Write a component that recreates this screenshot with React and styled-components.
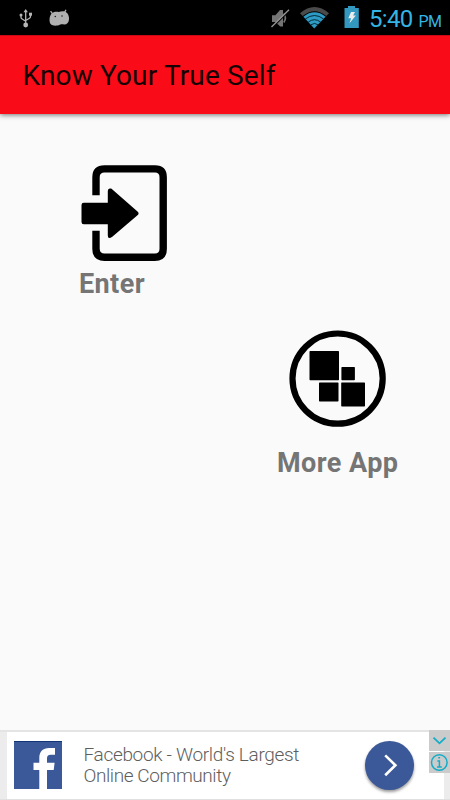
import React from "react";
import styled, { createGlobalStyle } from "styled-components";

const GlobalStyle = createGlobalStyle`
  * { box-sizing: border-box; }
  body { margin: 0; background: #fafafa; font-family: Roboto, "Liberation Sans", sans-serif; }
  svg { display: block; flex: none; }
`;

const Screen = styled.div`
  width: 450px;
  height: 800px;
  display: flex;
  flex-direction: column;
  overflow: hidden;
  background: #fafafa;
`;

const StatusBar = styled.header`
  height: 35px;
  flex: none;
  display: flex;
  justify-content: space-between;
  padding: 0 8px 0 19px;
  background: #000;
`;

const StatusGroup = styled.div`
  display: flex;
  align-items: flex-start;
`;

const StatusIcon = styled.svg`
  margin: ${({ $top }) => $top}px ${({ $gap }) => $gap}px 0 0;
`;

const Clock = styled.time`
  display: flex;
  align-items: baseline;
  gap: 6px;
  width: 73px;
  padding-top: 5px;
  color: #33b5e5;
  font-size: 24px;
  line-height: 29px;
  letter-spacing: -0.7px;
  white-space: nowrap;
`;

const Meridiem = styled.span`
  font-size: 16px;
  letter-spacing: -0.5px;
`;

const AppBar = styled.div`
  height: 79px;
  flex: none;
  display: flex;
  align-items: center;
  padding: 0 22.5px 0;
  background: #f90c17;
  box-shadow: 0 1px 5px rgba(0, 0, 0, 0.55);
  border-top: 1px solid #c90812;
`;

const Title = styled.h1`
  margin: 0;
  color: #160205;
  font-size: 28px;
  font-weight: 400;
  letter-spacing: 0.15px;
  white-space: nowrap;
`;

const Menu = styled.main`
  flex: 1;
  display: flex;
  flex-direction: column;
  align-items: flex-start;
  padding-top: 50px;
`;

const MenuItem = styled.button`
  display: flex;
  flex-direction: column;
  align-items: flex-start;
  gap: ${({ $gap }) => $gap}px;
  margin: ${({ $top }) => $top}px 0 0 ${({ $left }) => $left}px;
  padding: 0;
  border: 0;
  background: none;
  font-family: inherit;
`;

const MenuIcon = styled.svg`
  margin-left: ${({ $inset }) => $inset}px;
`;

const MenuLabel = styled.span`
  height: 32px;
  color: #757575;
  font-size: 27px;
  font-weight: 700;
  line-height: 32px;
  letter-spacing: ${({ $tracking }) => $tracking}px;
  white-space: nowrap;
`;

const AdBanner = styled.footer`
  position: relative;
  height: 70px;
  flex: none;
  display: flex;
  padding: 0 6px 0 7px;
  background: #ececec;
  border-top: 2px solid #e4e4e4;
  border-bottom: 1px solid #e0e0e0;
`;

const AdCard = styled.div`
  flex: 1;
  display: flex;
  align-items: flex-start;
  padding: 9px 0 0 7px;
  background: #fff;
`;

const AdText = styled.p`
  width: 250px;
  margin: 3px 0 0 21.5px;
  color: #5e5e5e;
  font-size: 19px;
  font-weight: 300;
  line-height: 21px;
  white-space: nowrap;
`;

const AdLine = styled.span`
  display: block;
  letter-spacing: ${({ $tracking }) => $tracking}px;
`;

const AdAction = styled.button`
  width: 49px;
  height: 49px;
  margin-left: 31.5px;
  padding: 0;
  border: 0;
  border-radius: 50%;
  background: #3b5998;
  box-shadow: 0 2px 3px rgba(0, 0, 0, 0.4);
`;

const AdControls = styled.div`
  position: absolute;
  top: -2px;
  right: 0;
  display: flex;
  flex-direction: column;
  gap: 1px;
`;

const AdControl = styled.button`
  width: 21px;
  height: 21px;
  padding: 0;
  border: 0;
  background: #cbcbcb;
`;

function UsbIcon() {
  return (
    <StatusIcon $top={9} $gap={16} width="14" height="19" viewBox="0 0 14 19" fill="none" stroke="#b5b5b5" strokeWidth="1.3">
      <path d="M6.7 2v14M2 6v2.2q0 1.2 1.2 1.8l3.5 2.2M11.5 5v2.6q0 1-1 1.6l-3.8 2.3" />
      <path d="M6.7 0 4.5 3.3h4.4Z" fill="#b5b5b5" stroke="none" />
      <circle cx="6.7" cy="16" r="2.4" fill="#b5b5b5" stroke="none" />
      <circle cx="2" cy="6" r="1.5" fill="#b5b5b5" stroke="none" />
      <path d="M10 3.7h3v3h-3z" fill="#b5b5b5" stroke="none" />
    </StatusIcon>
  );
}

function DebugIcon() {
  return (
    <StatusIcon $top={9} $gap={0} width="21" height="18" viewBox="0 0 21 18" fill="#b0b0b0">
      <path d="m1.6 2.2 2.3 3.2M17 .8l-2 3.6" stroke="#b0b0b0" strokeWidth="1.3" />
      <path d="M3.2 4C5.5 2.4 8 2.7 9.8 3.1 12 2.1 15.5 1.8 17.4 3.4c2 1.5 3 4.5 2.5 7.6-.4 2.9-2.2 4.4-4.4 4.5-1.5 0-2.4-.3-3.3-.2-1 .1-1.8 1.1-3.5 1.3-2.8.3-5.8.2-7.1-1.5C-.2 12.6.2 6.3 3.2 4Z" />
      <circle cx="6.3" cy="7.5" r=".8" fill="#222" />
      <circle cx="13" cy="7" r=".8" fill="#222" />
    </StatusIcon>
  );
}

function MutedIcon() {
  return (
    <StatusIcon $top={9} $gap={10} width="19" height="19" viewBox="0 0 19 19">
      <path d="M1 6.2h3.4L9 1h3v16.5H9.2L4.4 13H1Z" fill="#747474" />
      <path d="M12.8 4.5q3.2 4.5 0 9" fill="none" stroke="#747474" strokeWidth="1.7" />
      <path d="M1 19 18.6 1.6" stroke="#000" strokeWidth="1.3" />
      <path d="M.5 18 18 .7" stroke="#929292" strokeWidth="1.4" />
    </StatusIcon>
  );
}

function WifiIcon() {
  return (
    <StatusIcon $top={6} $gap={15} width="29" height="23" viewBox="0 0 29 23">
      <path d="M0 7.2Q14.5-5.4 29 7.2L26.3 10Q14.5.5 2.7 10Z" fill="#4a4a4a" />
      <path d="M3.4 10.7Q14.5 1.8 25.6 10.7L14.2 22.4Z" fill="#2e9bc5" />
      <path d="M5.3 13q9.2-7 18.4 0M8.3 16.1q6.2-4.8 12.4 0M11 18.8q3.5-2.8 7 0" fill="none" stroke="#001b27" strokeWidth=".9" />
    </StatusIcon>
  );
}

function BatteryIcon() {
  return (
    <StatusIcon $top={6} $gap={9} width="16" height="22" viewBox="0 0 16 22">
      <path d="M4 0h7v2h3.8v20H.5V2H4Z" fill="#3298c0" />
      <path d="M7 6h4L9.1 9.5h2.7L5.4 17.5l1.7-5.3H4.3Z" fill="#ececec" />
    </StatusIcon>
  );
}

function EnterIcon() {
  return (
    <MenuIcon $inset={2} width="87" height="98" viewBox="0 0 87 98">
      <path d="M15 31V13Q15 4.7 23.5 4.7H74Q82.2 4.7 82.2 13V84.5Q82.2 93 74 93H23.5Q15 93 15 84.5V66.5" transform="translate(0 .2)" fill="none" stroke="#000" strokeWidth="7.4" />
      <path d="M2.8 38.7H26.8V27q0-3.2 3-2.4.8.2 1.6 1L56.2 47.2q2.8 2.2 0 4.4L31.3 72.8q-4.5 3.1-4.5-1.3V60.2H2.8Q.5 60.2.5 58V41Q.5 38.7 2.8 38.7Z" />
    </MenuIcon>
  );
}

function AppsIcon() {
  return (
    <MenuIcon $inset={12} width="98" height="98" viewBox="0 0 98 98">
      <circle cx="48.6" cy="48.6" r="45.1" fill="none" stroke="#000" strokeWidth="6.2" />
      <rect x="20.5" y="21" width="29.5" height="29.3" rx=".7" />
      <rect x="52.4" y="37" width="13.5" height="13.3" rx=".7" />
      <rect x="30" y="52.4" width="19.5" height="19" rx=".7" />
      <rect x="52.2" y="52.4" width="23.8" height="24" rx=".7" />
    </MenuIcon>
  );
}

export default function App() {
  return (
    <>
      <GlobalStyle />
      <Screen>
        <StatusBar>
          <StatusGroup>
            <UsbIcon />
            <DebugIcon />
          </StatusGroup>
          <StatusGroup>
            <MutedIcon />
            <WifiIcon />
            <BatteryIcon />
            <Clock>5:40<Meridiem>PM</Meridiem></Clock>
          </StatusGroup>
        </StatusBar>
        <AppBar>
          <Title>Know Your True Self</Title>
        </AppBar>
        <Menu>
          <MenuItem $top={0} $left={79} $gap={6}>
            <EnterIcon />
            <MenuLabel $tracking={0.4}>Enter</MenuLabel>
          </MenuItem>
          <MenuItem $top={30} $left={277} $gap={19}>
            <AppsIcon />
            <MenuLabel $tracking={0.45}>More App</MenuLabel>
          </MenuItem>
        </Menu>
        <AdBanner>
          <AdCard>
            <svg width="48" height="48" viewBox="0 0 48 48">
              <path d="M0 0h48v48H0z" fill="#3b5998" />
              <path d="M0 .5h48" stroke="#123579" />
              <path d="M25.3 48V29h-5.8v-7.3h5.8v-4.5C25.3 10.5 29 7 35 7h6v6.7h-4.2c-3 0-3.8 1.4-3.8 3.8v4.2h7.6L39.7 29H33v19Z" fill="#fff" />
            </svg>
            <AdText>
              <AdLine $tracking={-0.32}>Facebook - World's Largest</AdLine>
              <AdLine $tracking={-0.42}>Online Community</AdLine>
            </AdText>
            <AdAction aria-label="Open">
              <svg width="49" height="49" viewBox="0 0 49 49" fill="none" stroke="#fff" strokeWidth="2.6">
                <path d="m20.2 14.4 10.2 9.8-10.2 10" />
              </svg>
            </AdAction>
          </AdCard>
          <AdControls>
            <AdControl aria-label="Collapse">
              <svg width="21" height="21" viewBox="0 0 21 21" fill="none" stroke="#12adc8" strokeWidth="1.8">
                <path d="m4.5 7.7 6 5.6 6-5.6" />
              </svg>
            </AdControl>
            <AdControl aria-label="Ad information">
              <svg width="21" height="21" viewBox="0 0 21 21" fill="none" stroke="#12adc8" strokeWidth="1.5">
                <circle cx="10.3" cy="10.5" r="7.8" />
                <path d="M8.4 9h2v6M8 15h4.8M9.3 5.8h1.8" />
              </svg>
            </AdControl>
          </AdControls>
        </AdBanner>
      </Screen>
    </>
  );
}
